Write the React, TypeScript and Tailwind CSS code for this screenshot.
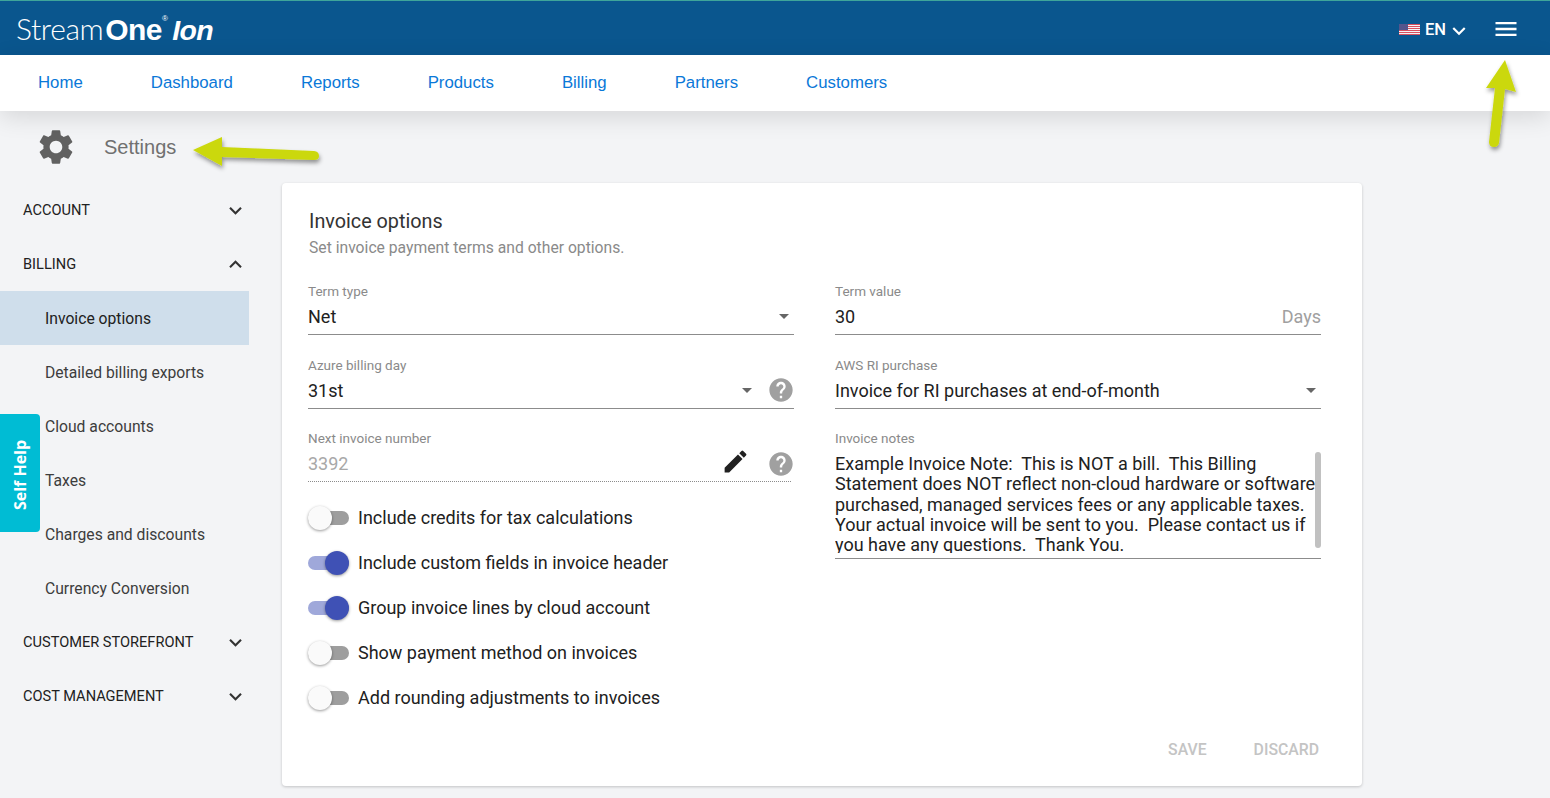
import { MdArrowDropDown, MdEdit, MdExpandLess, MdExpandMore, MdHelp, MdMenu, MdSettings, MdKeyboardArrowDown } from "react-icons/md";

const navLinks = ["Home", "Dashboard", "Reports", "Products", "Billing", "Partners", "Customers"];

function Flag() {
  return (
    <svg width="21" height="11" viewBox="0 0 21 11" className="block">
      <rect width="21" height="11" fill="#f3f3f5" />
      {[0, 2, 4, 6, 8, 10].map((y) => (
        <rect key={y} y={y} width="21" height="1" fill="#d9505f" />
      ))}
      <rect width="9" height="6" fill="#55558c" />
    </svg>
  );
}

function SideHead({ label, open }: { label: string; open?: boolean }) {
  return (
    <div className="h-[54px] pl-[23px] pr-px flex items-center justify-between text-[14.6px] text-[#212121]">
      <span className="pt-[2px]">{label}</span>
      {open ? <MdExpandLess size={25} className="text-[#333]" /> : <MdExpandMore size={25} className="text-[#333]" />}
    </div>
  );
}

function SideItem({ label, active }: { label: string; active?: boolean }) {
  return (
    <div className={`h-[54px] pl-[45px] pt-[2px] flex items-center text-[15.7px] text-[#3d3d3d] ${active ? "bg-[#cfdeeb] text-[#212121]" : ""}`}>
      {label}
    </div>
  );
}

function Field({ label, children, h = "h-[74px]", line = "border-b border-[#8c8c8c]" }: any) {
  return (
    <div className={h}>
      <div className="h-[17px] pt-px text-[13.5px] leading-[17px] text-[#8a8a8a]">{label}</div>
      <div className={`h-[35px] mt-[1px] pb-[2px] flex items-center text-[18px] text-[#212121] ${line}`}>{children}</div>
    </div>
  );
}

function Toggle({ label, on }: { label: string; on?: boolean }) {
  return (
    <div className="h-[45px] flex items-center">
      <div className={`relative w-[41px] h-[14px] rounded-full ${on ? "bg-[#9fa8da]" : "bg-[#9e9e9e]"}`}>
        <div
          className={`absolute top-[-5px] w-[24px] h-[24px] rounded-full shadow-[0_1px_3px_rgba(0,0,0,0.4)] ${on ? "right-0 bg-[#3f51b5]" : "left-0 bg-[#fafafa]"}`}
        />
      </div>
      <span className="ml-[9px] text-[18px] text-[#212121]">{label}</span>
    </div>
  );
}

export default function App() {
  return (
    <div className="relative h-[798px] w-[1550px] overflow-hidden bg-[#f3f4f6] font-['Roboto',sans-serif]">
      <header className="h-[55px] bg-[#0a568e] border-t border-[#3fa59a] flex items-center justify-between pl-[16px] pr-[30px]">
        <div className="flex items-baseline mt-[1px] text-white text-[30px] leading-none tracking-[-0.6px] font-['Liberation_Sans',sans-serif]">
          <span className="font-['Lato',sans-serif] font-light tracking-[-0.4px]">Stream</span>
          <span className="ml-[2px] font-bold">One</span>
          <span className="text-[8px] self-start mt-[2px]">®</span>
          <span className="ml-[5px] text-[28.5px] font-bold italic">Ion</span>
        </div>
        <div className="flex items-center mt-[3px] text-white">
          <Flag />
          <span className="ml-[5px] mt-[2px] text-[16.5px] font-medium">EN</span>
          <MdKeyboardArrowDown size={26} className="mt-[2px]" />
          <MdMenu size={28} className="ml-[20px] mt-[-2px]" />
        </div>
      </header>

      <nav className="relative h-[56px] bg-white pl-[38px] flex items-center gap-[68px] text-[16.8px] text-[#0a78d8] font-['Liberation_Sans',sans-serif] shadow-[0_6px_24px_rgba(0,0,0,0.12)]">
        {navLinks.map((l) => (
          <span key={l}>{l}</span>
        ))}
      </nav>

      <div className="h-[72px] pl-[35px] flex items-center">
        <MdSettings size={42} className="text-[#616161]" />
        <span className="ml-[27px] text-[20px] font-['Liberation_Sans',sans-serif] text-[#707070]">Settings</span>
      </div>

      <div className="flex">
        <aside className="w-[249px] shrink-0">
          <SideHead label="ACCOUNT" />
          <SideHead label="BILLING" open />
          <SideItem label="Invoice options" active />
          <SideItem label="Detailed billing exports" />
          <SideItem label="Cloud accounts" />
          <SideItem label="Taxes" />
          <SideItem label="Charges and discounts" />
          <SideItem label="Currency Conversion" />
          <SideHead label="CUSTOMER STOREFRONT" />
          <SideHead label="COST MANAGEMENT" />
        </aside>

        <main className="ml-[33px] w-[1080px] h-[603px] bg-white rounded-[4px] shadow-[0_1px_3px_rgba(0,0,0,0.2)] px-[26px] pt-[26px] flex flex-col">
          <h1 className="pl-px text-[19.8px] leading-[26px] text-[#333]">Invoice options</h1>
          <p className="pl-px text-[15.7px] leading-[26px] text-[#8a8a8a]">Set invoice payment terms and other options.</p>

          <div className="mt-[21px] grid grid-cols-[486px_486px] gap-x-[41px]">
            <div>
              <Field label="Term type">
                <span className="flex-1">Net</span>
                <MdArrowDropDown size={24} className="text-[#666] mr-[-2px]" />
              </Field>
              <Field label="Azure billing day" h="h-[73px]">
                <span className="flex-1">31st</span>
                <MdArrowDropDown size={24} className="text-[#666]" />
                <MdHelp size={28} className="ml-[8px] mr-[-1px] text-[#a0a0a0]" />
              </Field>
              <Field label="Next invoice number" line="w-[483px] border-b border-dotted border-[#8c8c8c]">
                <span className="flex-1 text-[#a8a8a8]">3392</span>
                <MdEdit size={29} className="text-[#212121] mr-[17px] mt-[-3px]" />
                <MdHelp size={28} className="mr-[-4px] mt-[2px] text-[#a0a0a0]" />
              </Field>
              <div className="mt-[-8px]">
                <Toggle label="Include credits for tax calculations" />
                <Toggle label="Include custom fields in invoice header" on />
                <Toggle label="Group invoice lines by cloud account" on />
                <Toggle label="Show payment method on invoices" />
                <Toggle label="Add rounding adjustments to invoices" />
              </div>
            </div>

            <div>
              <Field label="Term value">
                <span className="flex-1">30</span>
                <span className="text-[#a0a0a0]">Days</span>
              </Field>
              <Field label="AWS RI purchase" h="h-[73px]">
                <span className="flex-1">Invoice for RI purchases at end-of-month</span>
                <MdArrowDropDown size={24} className="text-[#666] mr-[-2px]" />
              </Field>
              <div className="h-[17px] pt-px text-[13.5px] leading-[17px] text-[#8a8a8a]">Invoice notes</div>
              <div className="relative mt-[6px] h-[107px] pb-[5px] border-b border-[#8c8c8c] text-[18px] leading-[20.3px] text-[#212121]">
                <div className="h-[101px] overflow-hidden">
                  <div className="w-[482px] pt-[2px]">
                    {"Example Invoice Note:\u00a0 This is NOT a bill.\u00a0 This Billing Statement does NOT reflect non-cloud hardware or software purchased, managed services fees or any applicable taxes. Your actual invoice will be sent to you.\u00a0 Please contact us if you have any questions.\u00a0 Thank You."}
                  </div>
                </div>
                <div className="absolute right-0 top-0 w-[6px] h-[96px] rounded-full bg-[#c1c1c1]" />
              </div>
            </div>
          </div>

          <div className="mt-auto mb-[24px] pr-[17px] flex justify-end gap-[47px] text-[15.8px] font-medium text-[#c4c4c4]">
            <span>SAVE</span>
            <span>DISCARD</span>
          </div>
        </main>
      </div>

      <div className="absolute left-0 top-[414px] w-[40px] h-[118px] rounded-r-[4px] bg-[#00bcd4] flex items-center justify-center">
        <span className="-rotate-90 mt-[3px] whitespace-nowrap text-white text-[16px] font-bold font-['Open_Sans',sans-serif]">Self Help</span>
      </div>

      {/* annotation arrows drawn over the screenshot */}
      <svg className="absolute left-0 top-0 pointer-events-none" width="1550" height="798">
        <defs>
          <filter id="arrowShadow" x="-30%" y="-30%" width="160%" height="160%">
            <feDropShadow dx="1" dy="3" stdDeviation="2" floodColor="#000" floodOpacity="0.4" />
          </filter>
        </defs>
        <g fill="#cbd80f" filter="url(#arrowShadow)">
          <path d="M193 150 L222 137 L222 147 L314 151 Q319 151.500 319 156 Q319 160 314 160 L222 157 L222 166 Z" />
          <path d="M1505 60 L1516 92 L1505 89 L1499 143 Q1498 147 1494 147 Q1489 147 1489 142 L1495 88 L1486 88 Z" />
        </g>
      </svg>
    </div>
  );
}
